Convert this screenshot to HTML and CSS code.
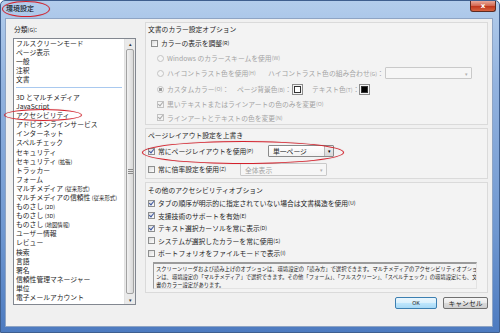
FILE: index.html
```html
<!DOCTYPE html>
<html lang="ja">
<head>
  <meta charset="UTF-8">
  <title>環境設定</title>
  <link rel="stylesheet" href="styles.css">
</head>
<body>
  <div class="window">
    <!-- タイトルバー -->
    <div class="titlebar">
      <span class="title">環境設定</span>
      <span class="close-btn">x</span>
    </div>

    <div class="client">
      <!-- 左側：分類リスト -->
      <div class="left">
        <div class="label">分類<span class="key">(G)</span>:</div>
        <div class="listbox">
          <ul class="items">
            <li>フルスクリーンモード</li>
            <li>ページ表示</li>
            <li>一般</li>
            <li>注釈</li>
            <li>文書</li>
            <li class="sep"></li>
            <li>3D とマルチメディア</li>
            <li>JavaScript</li>
            <li>アクセシビリティ</li>
            <li>アドビオンラインサービス</li>
            <li>インターネット</li>
            <li>スペルチェック</li>
            <li>セキュリティ</li>
            <li>セキュリティ <span class="key">(拡張)</span></li>
            <li>トラッカー</li>
            <li>フォーム</li>
            <li>マルチメディア <span class="key">(従来形式)</span></li>
            <li>マルチメディアの信頼性 <span class="key">(従来形式)</span></li>
            <li>ものさし <span class="key">(2D)</span></li>
            <li>ものさし <span class="key">(3D)</span></li>
            <li>ものさし <span class="key">(地図情報)</span></li>
            <li>ユーザー情報</li>
            <li>レビュー</li>
            <li>検索</li>
            <li>言語</li>
            <li>署名</li>
            <li>信頼性管理マネージャー</li>
            <li>単位</li>
            <li>電子メールアカウント</li>
          </ul>
          <div class="scrollbar">
            <div class="arrow">&#9652;</div>
            <div class="thumb"><span class="grip"></span></div>
            <div class="arrow">&#9662;</div>
          </div>
        </div>
      </div>

      <!-- 右側：設定 -->
      <div class="right">
        <section class="group g-color">
          <div class="group-title">文書のカラー設定オプション</div>
          <div class="row r16 ind1"><span class="cb"></span>カラーの表示を調整<span class="key">(R)</span></div>
          <div class="row r14 ind2 off"><span class="rb"></span>Windows のカラースキームを使用<span class="key">(W)</span></div>
          <div class="row r16 ind2 off">
            <span class="col-a"><span class="rb"></span>ハイコントラスト色を使用<span class="key">(H)</span></span>
            <span class="col-b">ハイコントラスト色の組み合わせ<span class="key">(G)</span>：</span>
            <span class="combo combo-hc off"><span class="combo-arrow">&#9662;</span></span>
          </div>
          <div class="row r16 ind2">
            <span class="col-c off"><span class="rb on"></span>カスタムカラー<span class="key">(O)</span>：</span>
            <span class="col-d off">ページ背景色<span class="key">(B)</span>：</span>
            <span class="swatch"><span class="swatch-in white"></span></span>
            <span class="col-e off">テキスト色<span class="key">(T)</span>：</span>
            <span class="swatch"><span class="swatch-in black"></span></span>
          </div>
          <div class="row r14 ind2 off"><span class="cb checked dim"></span>黒いテキストまたはラインアートの色のみを変更<span class="key">(O)</span></div>
          <div class="row r13 ind2 off"><span class="cb checked dim"></span>ラインアートとテキストの色を変更<span class="key">(N)</span></div>
        </section>

        <section class="group g-layout">
          <div class="group-title">ページレイアウト設定を上書き</div>
          <div class="row r20">
            <span class="col-f"><span class="cb checked"></span>常にページレイアウトを使用<span class="key">(P)</span></span>
            <span class="combo combo-page">単一ページ<span class="combo-arrow dark">&#9662;</span></span>
          </div>
          <div class="row r16">
            <span class="col-g"><span class="cb"></span>常に倍率設定を使用<span class="key">(Z)</span></span>
            <span class="combo combo-zoom off">全体表示<span class="combo-arrow">&#9662;</span></span>
          </div>
        </section>

        <section class="group g-other">
          <div class="group-title tall">その他のアクセシビリティオプション</div>
          <div class="row r12"><span class="cb checked"></span>タブの順序が明示的に指定されていない場合は文書構造を使用<span class="key">(U)</span></div>
          <div class="row r12"><span class="cb checked"></span>支援技術のサポートを有効<span class="key">(E)</span></div>
          <div class="row r12"><span class="cb checked"></span>テキスト選択カーソルを常に表示<span class="key">(D)</span></div>
          <div class="row r12"><span class="cb"></span>システムが選択したカラーを常に使用<span class="key">(S)</span></div>
          <div class="row r12"><span class="cb"></span>ポートフォリオをファイルモードで表示<span class="key">(I)</span></div>
          <div class="help">
            スクリーンリーダおよび読み上げのオプションは、環境設定の「読み方」で選択できます。マルチメディアのアクセシビリティオプショ<br>
            ンは、環境設定の「マルチメディア」で選択できます。その他「フォーム」、「フルスクリーン」、「スペルチェック」の環境設定にも、文<br>
            書のカラー設定があります。
          </div>
        </section>

        <div class="buttons">
          <button class="btn btn-ok">OK</button>
          <button class="btn">キャンセル</button>
        </div>
      </div>
    </div>

    <!-- 赤い丸の注釈 -->
    <div class="mark mark-title"></div>
    <div class="mark mark-item"></div>
    <div class="mark mark-layout"></div>
  </div>
</body>
</html>
```

FILE: styles.css
```css
/* 全体 */
* { margin: 0; padding: 0; box-sizing: border-box; }
body {
  width: 500px;
  height: 333px;
  overflow: hidden;
  font-family: "Noto Sans CJK JP", "Noto Sans", sans-serif;
  font-size: 6.8px;
  color: #1e1e1e;
  background: #fff;
}
ul { list-style: none; }

/* ウィンドウ枠 */
.window {
  position: relative;
  width: 500px;
  height: 333px;
  display: flex;
  flex-direction: column;
  border: 1px solid #3f5f8f;
  border-radius: 5px 5px 0 0;
  background: linear-gradient(to bottom, #b3cdec 0, #93b3df 25%, #6f97d0 70%, #4d7bc0 100%);
}
.titlebar {
  height: 17px;
  display: flex;
  align-items: flex-start;
  padding-left: 5px;
}
.title {
  font-size: 7px;
  line-height: 14px;
  color: #000;
}
.close-btn {
  margin-left: auto;
  margin-right: 3px;
  width: 26px;
  height: 11px;
  border: 1px solid #5c2a22;
  border-top: none;
  border-radius: 0 0 3px 3px;
  background: linear-gradient(to bottom, #e9a99b 0, #d46a54 45%, #c0391f 55%, #d7623f 100%);
  color: #fff;
  font-family: "DejaVu Sans", sans-serif;
  font-weight: bold;
  font-size: 7px;
  line-height: 10px;
  text-align: center;
}

/* クライアント領域 */
.client {
  flex: 1;
  margin: 0 6px 5px 4px;
  border: 1px solid #8ea4c4;
  background: #f0f0f0;
  display: flex;
  gap: 9px;
  padding: 3px 4px 0 7px;
}
.key { font-size: 5.4px; }

/* 左側リスト */
.left { width: 123px; }
.label {
  height: 14px;
  line-height: 14px;
  padding-left: 1px;
}
.listbox {
  margin-top: 2px;
  height: 267px;
  border: 1px solid #828790;
  background: #fff;
  display: flex;
  overflow: hidden;
}
.items {
  flex: 1;
  padding-left: 2px;
}
.items li {
  line-height: 9.1px;
  height: 9.1px;
  white-space: nowrap;
}
.items li.sep {
  height: 4px;
  margin: 0 2px 4.5px 0;
  border-bottom: 1px solid #a9c9ef;
}
.scrollbar {
  width: 11px;
  display: flex;
  flex-direction: column;
  background: #eaeaea;
  border-left: 1px solid #e2e2e2;
}
.arrow {
  height: 9px;
  font-size: 5px;
  line-height: 9px;
  text-align: center;
  color: #333;
}
.thumb {
  flex: 1;
  margin: 1px 1px;
  border: 1px solid #a2a2a2;
  border-radius: 2px;
  background: linear-gradient(to right, #f1f1f1, #d9d9d9);
  display: flex;
  align-items: center;
  justify-content: center;
}
.grip {
  width: 5px;
  height: 5px;
  border-top: 1px solid #8a8a8a;
  border-bottom: 1px solid #8a8a8a;
  background: linear-gradient(to bottom, transparent 1px, #8a8a8a 1px, #8a8a8a 2px, transparent 2px);
}

/* 右側グループ */
.right {
  width: 343px;
  display: flex;
  flex-direction: column;
  gap: 3px;
}
.group {
  border: 1px solid #dadada;
  background: #f3f3f3;
  padding: 0 2px;
}
.group-title {
  height: 12px;
  line-height: 12px;
}
.group-title.tall { height: 14px; line-height: 14px; }
.g-layout { padding-bottom: 1px; }
.g-other { padding-bottom: 3px; }

.row {
  display: flex;
  align-items: center;
  white-space: nowrap;
}
.r12 { height: 12.5px; }
.r13 { height: 13px; }
.r14 { height: 14px; }
.r16 { height: 16px; }
.r20 { height: 20px; }
.ind1 { padding-left: 3px; }
.ind2 { padding-left: 9px; }
.off { color: #a3a3a3; }

.col-a { width: 111px; display: flex; align-items: center; }
.col-b { width: 117px; }
.col-c { width: 80px; display: flex; align-items: center; }
.col-d { width: 55px; }
.col-e { margin-left: 9px; width: 47px; }
.col-f { width: 120px; display: flex; align-items: center; }
.col-g { width: 92px; display: flex; align-items: center; }

/* チェックボックスとラジオ */
.cb {
  position: relative;
  width: 7px;
  height: 7px;
  margin-right: 3px;
  border: 1px solid #8e8f8f;
  background: linear-gradient(135deg, #dcdcdc, #fdfdfd);
  flex: none;
}
.cb.checked::after {
  content: "";
  position: absolute;
  left: 1px;
  top: -1px;
  width: 2px;
  height: 4px;
  border-right: 1.3px solid #3d57a0;
  border-bottom: 1.3px solid #3d57a0;
  transform: rotate(40deg);
}
.cb.dim { border-color: #c2c2c2; background: #f4f4f4; }
.cb.dim::after { border-color: #a9a9a9; }
.rb {
  width: 7px;
  height: 7px;
  margin-right: 3px;
  border: 1px solid #c3c3c3;
  border-radius: 50%;
  background: #f5f5f5;
  flex: none;
}
.rb.on { background: radial-gradient(circle, #9c9c9c 0 1.6px, #f5f5f5 2px); }

/* コンボボックス */
.combo {
  position: relative;
  display: flex;
  align-items: center;
  padding-left: 4px;
  border: 1px solid #c9c9c9;
  background: #f6f6f6;
  border-radius: 1px;
}
.combo-hc { width: 87px; height: 12px; }
.combo-page {
  width: 66px;
  height: 12px;
  border-color: #8a8a8a;
  background: linear-gradient(to bottom, #ffffff, #f2f2f2);
}
.combo-zoom { width: 87px; height: 13px; margin-top: 1px; }
.combo-arrow {
  margin-left: auto;
  width: 9px;
  font-size: 5px;
  text-align: center;
  color: #b0b0b0;
}
.combo-arrow.dark {
  height: 100%;
  line-height: 10px;
  color: #000;
  background: linear-gradient(to bottom, #f0f0f0, #d8d8d8);
  border-left: 1px solid #b8b8b8;
}

/* 色見本 */
.swatch {
  width: 11px;
  height: 11px;
  border: 1px solid #8c8c8c;
  background: #f4f4f4;
  padding: 1px;
  flex: none;
}
.swatch-in {
  display: block;
  width: 100%;
  height: 100%;
  border: 1px solid #333;
}
.swatch-in.white { background: #fff; }
.swatch-in.black { background: #000; }

/* 説明文 */
.help {
  margin: 2px 8px 0 5px;
  height: 27px;
  padding: 1px 2px;
  border-top: 2px solid #9b9b9b;
  border-left: 1px solid #9b9b9b;
  border-right: 1px solid #e3e3e3;
  border-bottom: 1px solid #e3e3e3;
  background: #f3f3f3;
  font-size: 5.3px;
  line-height: 8px;
  white-space: nowrap;
  overflow: hidden;
}

/* ボタン */
.buttons {
  margin-top: 1px;
  display: flex;
  justify-content: flex-end;
  gap: 6px;
}
.btn {
  width: 45px;
  height: 12px;
  border: 1px solid #707070;
  border-radius: 2px;
  background: linear-gradient(to bottom, #f6f6f6 0, #e9e9e9 50%, #dadada 51%, #cfcfcf 100%);
  font-family: "Noto Sans CJK JP", sans-serif;
  font-size: 6.8px;
  line-height: 10px;
  color: #1e1e1e;
}
.btn-ok {
  width: 42px;
  font-size: 5.4px;
  border-color: #3c7fb1;
  background: linear-gradient(to bottom, #eaf6fd 0, #d9f0fc 50%, #bee6fd 51%, #a7d9f5 100%);
}

/* 赤い丸の注釈 */
.mark {
  position: absolute;
  border: 1.5px solid #d3202b;
  border-radius: 50%;
  box-shadow: 0 0 1px rgba(120, 0, 0, 0.4);
}
.mark-title { left: 1px; top: 0; width: 48px; height: 16px; }
.mark-item { left: 3px; top: 108px; width: 78px; height: 12px; }
.mark-layout { left: 141px; top: 140px; width: 202px; height: 23px; }
```
